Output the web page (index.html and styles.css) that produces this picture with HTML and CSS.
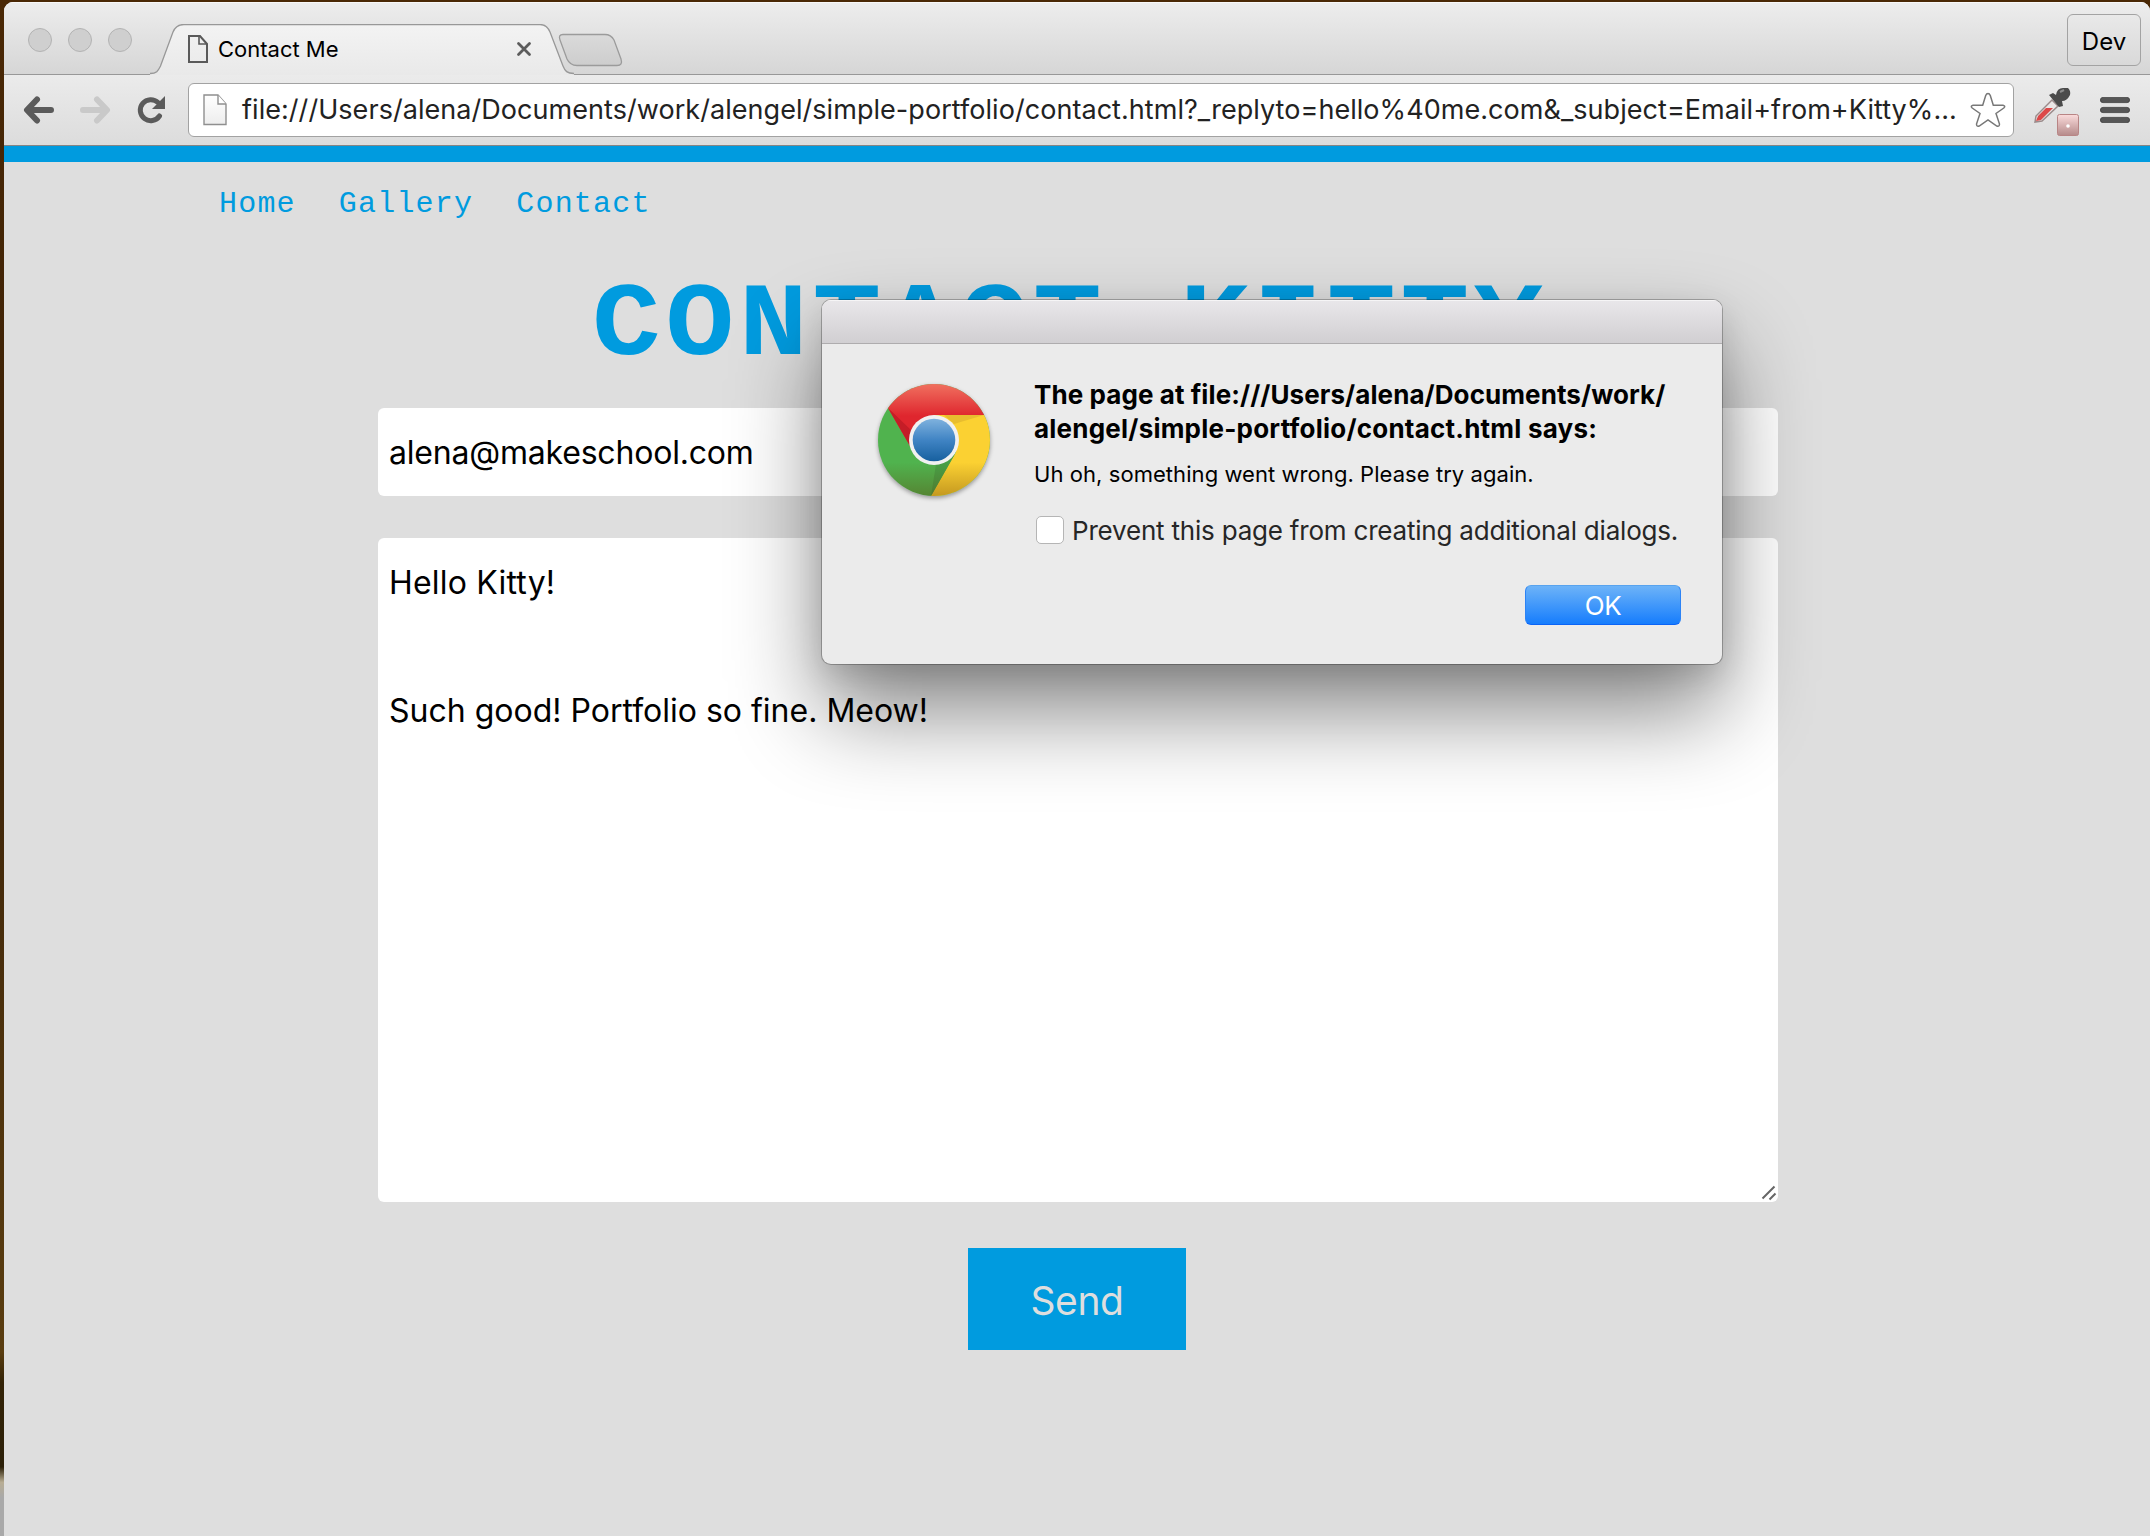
FILE: index.html
```html
<!DOCTYPE html>
<html lang="en">
<head>
<meta charset="utf-8">
<title>Contact Me</title>
<link rel="stylesheet" href="styles.css">
</head>
<body>
<div class="window">
  <header class="tabstrip">
    <div class="lights"><i></i><i></i><i></i></div>
    <div class="tab">
      <svg class="tab-shape" width="426" height="51" viewBox="0 0 426 51">
        <defs><linearGradient id="tabfill" x1="0" y1="0" x2="0" y2="1"><stop offset="0" stop-color="#f3f3f3"/><stop offset="1" stop-color="#e9e9e9"/></linearGradient></defs>
        <path d="M0 51V49.500C7 49.500 8 47 10.500 42L23 8Q26 .5 34 .5H390Q397 .5 400 8L413 42C415 47 417 49.500 424 49.500V51Z" fill="url(#tabfill)"/>
        <path d="M0 49.500C7 49.500 8 47 10.500 42L23 8Q26 .5 34 .5H390Q397 .5 400 8L413 42C415 47 417 49.500 424 49.500" fill="none" stroke="#989898" stroke-width="1.300"/>
      </svg>
      <svg class="tab-page" width="20" height="28" viewBox="0 0 20 28" fill="none" stroke="#5a5a5a" stroke-width="2"><path d="M1 1H12L19 9V27H1Z"/><path d="M11 1V9H19" stroke-width="1.600"/></svg>
      <span class="tab-title">Contact Me</span>
      <svg class="tab-close" width="16" height="16" viewBox="0 0 16 16" stroke="#5c5c5c" stroke-width="2.800" stroke-linecap="round"><path d="M2.500 2.500L13.500 13.500M13.500 2.500L2.500 13.500"/></svg>
    </div>
    <svg class="newtab" width="66" height="34" viewBox="0 0 66 34">
      <defs><linearGradient id="nt" x1="0" y1="0" x2="0" y2="1"><stop offset="0" stop-color="#dadada"/><stop offset="1" stop-color="#cdcdcd"/></linearGradient></defs>
      <path d="M5 1.500H47Q53 1.500 56 7L63 26Q65 32.500 59 32.500H19Q12 32.500 9 26L2 7Q0 1.500 5 1.500Z" fill="url(#nt)" stroke="#9b9b9b" stroke-width="1.300"/>
    </svg>
    <span class="profile">Dev</span>
  </header>
  <div class="toolbar">
    <svg class="back" width="32" height="28" viewBox="0 0 32 28" fill="none" stroke="#5b5b5b" stroke-width="6" stroke-linecap="round" stroke-linejoin="round"><path d="M5 14H28M14 3.500L4 14L14 24.500"/></svg>
    <svg class="forward" width="32" height="28" viewBox="0 0 32 28" fill="none" stroke="#c9c9c9" stroke-width="6" stroke-linecap="round" stroke-linejoin="round"><path d="M27 14H4M18 3.500L28 14L18 24.500"/></svg>
    <svg class="reload" width="30" height="28" viewBox="0 0 30 28"><path d="M22.500 20A10.500 10.500 0 1 1 21 6.500" fill="none" stroke="#5b5b5b" stroke-width="5" stroke-linecap="round"/><path d="M28 0V13H15Z" fill="#5b5b5b"/></svg>
    <div class="omnibox">
      <svg class="url-page" width="24" height="32" viewBox="0 0 24 32"><defs><linearGradient id="pg" x1="0" y1="0" x2="0" y2="1"><stop offset="0" stop-color="#fff"/><stop offset="1" stop-color="#ededed"/></linearGradient></defs><path d="M1 1H15L23 10V30.500H1Z" fill="url(#pg)" stroke="#8f8f8f" stroke-width="1.400"/><path d="M15 1V10H23" fill="#fff" stroke="#8f8f8f" stroke-width="1.400"/></svg>
      <span class="url">file:///Users/alena/Documents/work/alengel/simple-portfolio/contact.html?_replyto=hello%40me.com&amp;_subject=Email+from+Kitty%...</span>
      <svg class="star" width="36" height="36" viewBox="0 0 36 36"><path d="M18 1.500Q19.500 1.500 20.300 3.500L23.300 13.200L33 13.200Q36 14 33.800 16L26 21.500L29.500 32Q29.500 35 26.800 34L18 27.800L9.200 34Q6.500 35 6.500 32L10 21.500L2.200 16Q0 14 3 13.200L12.700 13.200L15.700 3.500Q16.500 1.500 18 1.500Z" fill="#fff" stroke="#787878" stroke-width="1.500"/></svg>
    </div>
    <svg class="picker" width="48" height="50" viewBox="0 0 48 50">
      <defs><linearGradient id="pk" x1="0" y1="0" x2="0" y2="1"><stop offset="0" stop-color="#fbdcdc"/><stop offset="1" stop-color="#b58a8a"/></linearGradient></defs>
      <path d="M3 35L4 29L20 13L26 19L10 34Z" fill="#ebe6e6" stroke="#9b8b8b" stroke-width="1.500"/>
      <path d="M4 34L6 29L14 21L21 21L9 33Z" fill="#dc4848"/>
      <path d="M17 8L21 6L24 8Q25 1 31 1H36Q39 4 38 8Q35 14 30 14L31 19L27 20Z" fill="#4b4b4b"/>
      <path d="M28 5L32 3" stroke="#8a8a8a" stroke-width="2"/>
      <rect x="25.500" y="27.500" width="21" height="21" rx="2" fill="url(#pk)" stroke="#b88585"/><circle cx="36" cy="39" r="1.800" fill="#fff"/>
    </svg>
    <svg class="menu" width="30" height="26" viewBox="0 0 30 26" fill="#565656" stroke="#3d3d3d" stroke-width=".8"><rect x=".4" y=".4" width="29.200" height="5.200" rx="2.600"/><rect x=".4" y="10.400" width="29.200" height="5.200" rx="2.600"/><rect x=".4" y="20.400" width="29.200" height="5.200" rx="2.600"/></svg>
  </div>
  <main class="page">
    <nav class="nav"><a>Home</a><a>Gallery</a><a>Contact</a></nav>
    <h1 class="heading">CONTACT KITTY</h1>
    <form class="form">
      <div class="email">alena@makeschool.com</div>
      <div class="message"><p class="greeting">Hello Kitty!</p><p><br></p><p>Such good! Portfolio so fine. Meow!</p>
        <svg class="grip" width="16" height="16" viewBox="0 0 16 16" stroke="#666" stroke-width="2"><path d="M1.500 13.500L13.500 1.500M8.500 14.500L14.500 8.500"/></svg>
      </div>
      <div class="send">Send</div>
    </form>
  </main>
</div>
<section class="dialog">
  <div class="dialog-bar"></div>
  <div class="dialog-body">
    <svg class="chrome" width="124" height="124" viewBox="-62 -60 124 124">
      <defs>
        <clipPath id="disc"><circle r="56"/></clipPath>
        <linearGradient id="cr" x1="0" y1="-56" x2="0" y2="-24" gradientUnits="userSpaceOnUse"><stop offset="0" stop-color="#f0705f"/><stop offset="1" stop-color="#df262e"/></linearGradient>
        <linearGradient id="cb" x1="0" y1="0" x2="0" y2="1"><stop offset="0" stop-color="#7fb2de"/><stop offset=".5" stop-color="#4084c4"/><stop offset="1" stop-color="#17609f"/></linearGradient>
        <linearGradient id="cs" x1="0" y1="0" x2="0" y2="1"><stop offset=".7" stop-color="#603000" stop-opacity="0"/><stop offset="1" stop-color="#603000" stop-opacity=".35"/></linearGradient>
      </defs>
      <g clip-path="url(#disc)">
        <rect x="-60" y="-60" width="120" height="120" fill="#50b34e"/>
        <path d="M0 -25H60V60H-6L-3 56L22 12Z" fill="#fbd132"/>
        <path d="M10 -25H50L20 -16Z" fill="#e8bd2f"/>
        <path d="M21 14L-3 56L2 24Z" fill="#48a047"/>
        <path d="M-60 -58H60V-25H0L-24 6L-46 -32Z" fill="url(#cr)"/>
        <path d="M-46 -32L-24 6L-22 -9Z" fill="#c51d27"/>
        <circle r="56" fill="url(#cs)"/>
      </g>
      <circle r="25" fill="#f1f1f1"/><circle r="21.300" fill="url(#cb)"/>
    </svg>
    <div class="dialog-text">
      <h2><span class="origin">The page at file:///Users/alena/Documents/work/</span><br><span class="origin-rest">alengel/simple-portfolio/contact.html says:</span></h2>
      <p class="msg">Uh oh, something went wrong. Please try again.</p>
      <div class="prevent"><i class="box"></i><span>Prevent this page from creating additional dialogs.</span></div>
      <div class="actions"><div class="ok">OK</div></div>
    </div>
  </div>
</section>
</body>
</html>
```
FILE: styles.css
```css
* { box-sizing: border-box; }
body {
  margin: 0;
  height: 1536px;
  overflow: hidden;
  position: relative;
  padding: 2px 0 0 4px;
  font-family: Inter, "Liberation Sans", sans-serif;
  color: #000;
  background: linear-gradient(#4a2805 0, #3a2108 40%, #5a3d10 88%, #332307 90%, #2c2008 95.500%, #b8ad93 96.500%, #a9a9a9 97.500%, #a9a9a9 100%);
}
.window {
  height: 1534px;
  display: flex;
  flex-direction: column;
  border-radius: 9px 9px 0 0;
  background: #dedede;
  overflow: hidden;
}
svg { display: block; flex: none; }
span { white-space: nowrap; }

.tabstrip {
  height: 73px;
  flex: none;
  display: flex;
  align-items: flex-end;
  background: linear-gradient(#ededed, #d6d6d6);
  border-bottom: 1px solid #989898;
  box-shadow: inset 0 1px #f8f8f8;
}
.lights { display: flex; gap: 16px; padding: 0 0 22px 24px; width: 146px; }
.lights i { width: 24px; height: 24px; border-radius: 50%; background: #cfcfcf; border: 1px solid #b3b3b3; }
.tab {
  width: 426px;
  height: 51px;
  flex: none;
  position: relative;
  margin-bottom: -1px;
  display: flex;
  align-items: center;
  padding: 0 44px 2px 38px;
}
.tab > * { position: relative; }
.tab .tab-shape { position: absolute; left: 0; top: 0; }
.tab-title { margin-left: 10px; font-size: 22px; line-height: 26px; flex: 1; }
.newtab { margin: 0 0 7px -18px; }
.profile {
  margin: 0 9px 8px auto;
  width: 74px;
  height: 52px;
  border: 1px solid #a3a3a3;
  border-radius: 6px;
  font-size: 24px;
  line-height: 54px;
  text-align: center;
}

.toolbar {
  height: 71px;
  flex: none;
  display: flex;
  align-items: center;
  padding: 0 20px 1px 19px;
  background: linear-gradient(#ebebeb, #dcdcdc);
  border-bottom: 1px solid #858585;
}
.forward { margin-left: 24px; }
.reload { margin-left: 26px; }
.omnibox {
  width: 1826px;
  height: 54px;
  flex: none;
  margin-left: 21px;
  display: flex;
  align-items: center;
  background: #fff;
  border: 1px solid #a2a2a2;
  border-radius: 6px;
  padding: 0 7px 0 14px;
}
.url { margin-left: 15px; font-size: 27px; letter-spacing: .05px; color: #222; flex: 1; }
.picker { margin: 4px 0 0 18px; }
.menu { margin-left: auto; }

.page { flex: 1; border-top: 16px solid #009bdf; display: flex; flex-direction: column; padding: 23px 372px 0 215px; }
.nav { display: flex; gap: 43px; font-family: "Liberation Mono", monospace; font-size: 30px; line-height: 38px; letter-spacing: 1.200px; color: #009bdf; }
.heading {
  margin: 69px 0 0 373px;
  font: bold 104px/68px "Liberation Mono", monospace;
  letter-spacing: 4.400px;
  white-space: nowrap;
  transform: scaleX(1.1);
  transform-origin: left;
  color: #009bdf;
}
.form { margin: 48px 0 0 159px; width: 1400px; display: flex; flex-direction: column; }
.email { height: 88px; background: #fff; border-radius: 6px; padding: 0 11px; font-size: 32px; line-height: 90px; letter-spacing: -.2px; }
.message { height: 664px; margin-top: 42px; background: #fff; border-radius: 6px; padding: 13px 11px; font-size: 32px; line-height: 64px; position: relative; }
.message p { margin: 0; }
.message .greeting { letter-spacing: .2px; }
.grip { position: absolute; right: 1px; bottom: 1px; }
.send { width: 218px; height: 102px; margin: 46px 0 0 590px; background: #009bdf; color: #dedede; font-size: 39px; line-height: 105px; letter-spacing: -.4px; text-align: center; }

.dialog {
  position: absolute;
  left: 822px;
  top: 300px;
  width: 900px;
  height: 364px;
  border-radius: 9px;
  background: #ebebeb;
  overflow: hidden;
  box-shadow: 0 0 0 1px rgba(0,0,0,.25), 0 48px 90px rgba(0,0,0,.48), 0 10px 30px rgba(0,0,0,.12);
}
.dialog-bar { height: 44px; background: linear-gradient(#e9e7ea, #d1cfd2); border-bottom: 1px solid #aeacae; box-shadow: inset 0 1px #f6f5f6; }
.dialog-body { display: flex; padding: 36px 41px 0 50px; }
.chrome { filter: drop-shadow(0 2px 2px rgba(0,0,0,.35)); }
.dialog-text { flex: 1; min-width: 0; margin-left: 38px; }
.dialog-text h2 { margin: -2px 0 0; font-size: 26px; line-height: 34px; font-weight: 700; }
.origin { letter-spacing: .08px; }
.origin-rest { letter-spacing: .22px; }
.msg { margin: 13px 0 0; font-size: 22px; line-height: 30px; letter-spacing: .06px; }
.prevent { display: flex; align-items: center; margin-top: 26px; height: 30px; font-size: 26px; letter-spacing: -.2px; color: #262626; }
.box { width: 28px; height: 28px; margin: 0 8px 0 2px; flex: none; background: #fff; border: 1px solid #b5b5b5; border-radius: 5px; }
.actions { display: flex; justify-content: flex-end; margin-top: 40px; }
.ok { width: 156px; height: 40px; border-radius: 6px; background: linear-gradient(#6db3f8, #167dfd); border: 1px solid; border-color: #58a3ee #2c83f5 #0b64f6; color: #fff; font-size: 26px; line-height: 39px; letter-spacing: -.5px; text-align: center; }
```
